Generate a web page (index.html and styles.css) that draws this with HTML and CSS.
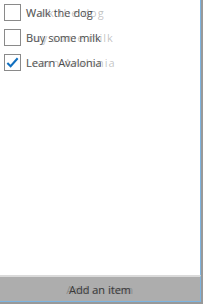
FILE: index.html
```html
<!DOCTYPE html>
<html lang="en">
<head>
  <meta charset="UTF-8">
  <meta name="viewport" content="width=device-width, initial-scale=1.0">
  <title>Todo</title>
  <link rel="stylesheet" href="styles.css">
</head>
<body>
  <div class="ventana">
    <ul class="lista">
      <li class="item">
        <span class="caja"></span>
        <span class="texto">Walk the dog<span class="eco">Walk the dog</span></span>
      </li>
      <li class="item">
        <span class="caja"></span>
        <span class="texto">Buy some milk<span class="eco">Buy some milk</span></span>
      </li>
      <li class="item">
        <span class="caja">
          <svg viewBox="0 0 16 16" width="15" height="15"><path d="M2.5 8.5 L6 12 L13.5 3.5" fill="none" stroke="#1170c0" stroke-width="2.2"/></svg>
        </span>
        <span class="texto">Learn Avalonia<span class="eco">Learn Avalonia</span></span>
      </li>
    </ul>
    <button class="agregar">
      <span class="texto">Add an item<span class="eco">Add an item</span></span>
    </button>
  </div>
</body>
</html>
```

FILE: styles.css
```css
body {
  margin: 0;
  padding: 0;
  width: 203px;
  height: 304px;
  background-color: #fff;
  font-family: "Open Sans", "Noto Sans", sans-serif;
  font-size: 11px;
}

.ventana {
  box-sizing: border-box;
  width: 203px;
  height: 304px;
  display: flex;
  flex-direction: column;
  border-right: 2px solid #999;
  border-bottom: 2px solid #999;
}

.lista {
  flex: 1;
  margin: 0;
  padding: 4px 0 0 4px;
  list-style: none;
  border-right: 1px solid #7db4e0;
}

.item {
  display: flex;
  align-items: center;
  height: 17px;
  margin-bottom: 8px;
}

.caja {
  box-sizing: border-box;
  width: 17px;
  height: 17px;
  border: 1px solid #8a8a8a;
  background: #fff;
  display: flex;
  align-items: center;
  justify-content: center;
  margin-right: 5px;
}

.texto {
  position: relative;
  color: #4a4a4a;
  white-space: nowrap;
}

/* copia tenue desplazada, como en la captura */
.eco {
  position: absolute;
  left: 0;
  top: 0;
  color: rgba(120, 120, 120, 0.45);
  letter-spacing: 1px;
}

.agregar {
  height: 27px;
  margin: 0;
  padding: 0;
  border: none;
  border-top: 2px solid #dadada;
  border-right: 1px solid #7db4e0;
  border-bottom: 1px solid #7db4e0;
  background-color: #adadad;
  font-family: inherit;
  font-size: 11px;
  display: flex;
  align-items: center;
  justify-content: center;
}

.agregar .texto {
  color: #333;
}

.agregar .eco {
  left: 50%;
  transform: translateX(-50%);
  letter-spacing: 0.5px;
  color: rgba(90, 90, 90, 0.4);
}
```
